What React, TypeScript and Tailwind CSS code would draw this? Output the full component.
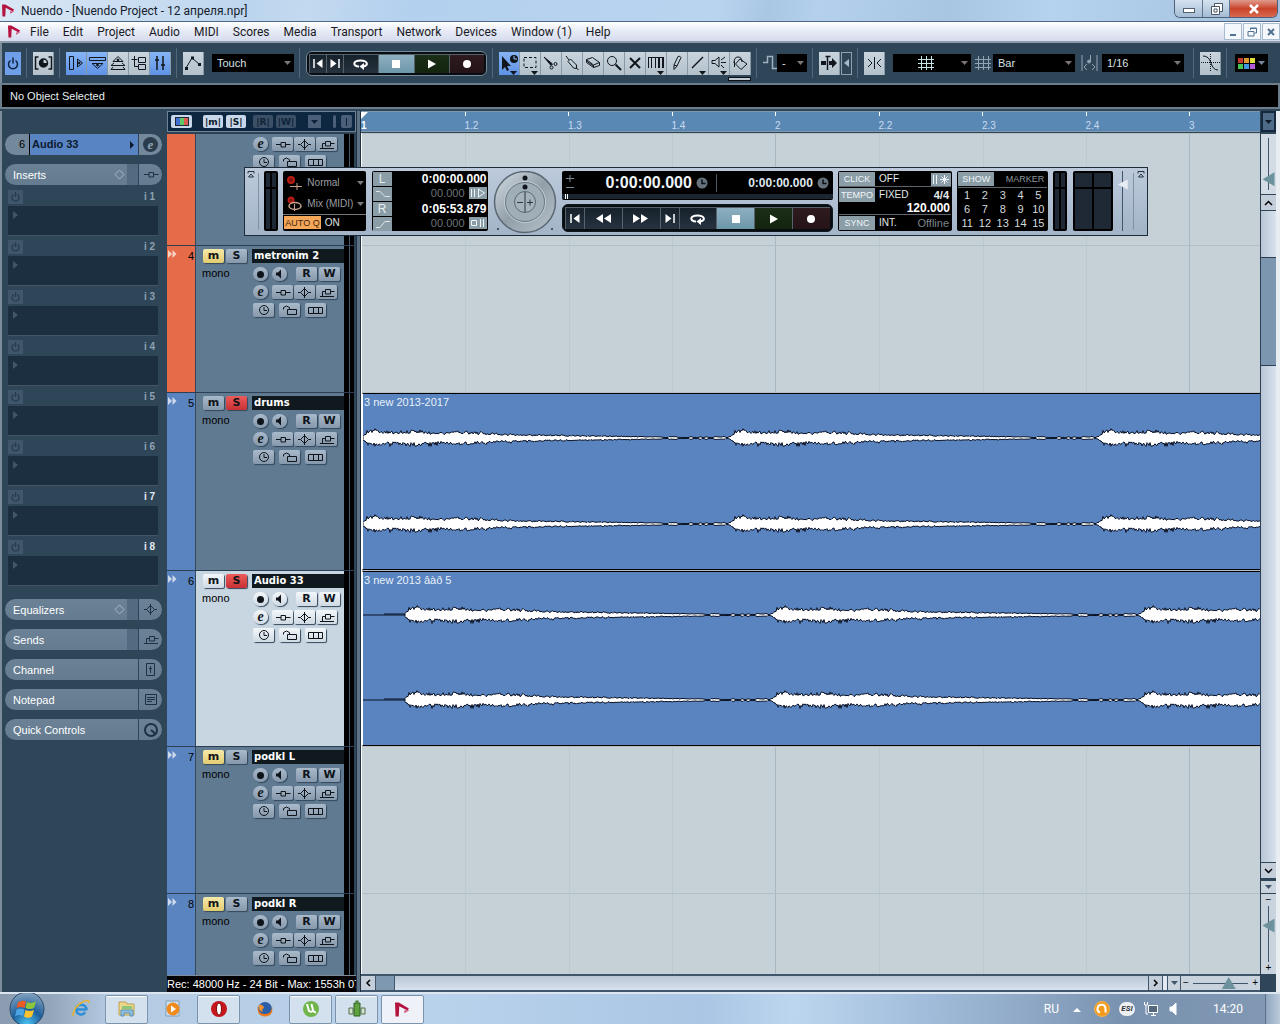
import type { ReactNode } from 'react';
import clsx from 'clsx';

const MENU = ['File', 'Edit', 'Project', 'Audio', 'MIDI', 'Scores', 'Media', 'Transport', 'Network', 'Devices', 'Window (1)', 'Help'];

/* ---------- small drawings ---------- */

interface DrawProps {
  d?: string;
  w?: number;
  h?: number;
  fill?: string;
  sw?: number;
  className?: string;
  children?: ReactNode;
}

function Draw({ d, w = 16, h = 16, fill = 'none', sw = 1, className, children }: DrawProps) {
  return (
    <svg
      width={w}
      height={h}
      viewBox={`0 0 ${w} ${h}`}
      fill={fill}
      stroke="currentColor"
      strokeWidth={sw}
      className={clsx('block shrink-0', className)}
      aria-hidden="true"
    >
      {d && <path d={d} />}
      {children}
    </svg>
  );
}

function Caret({ className }: { className?: string }) {
  return (
    <svg width="7" height="4" viewBox="0 0 7 4" className={clsx('block shrink-0', className)} aria-hidden="true">
      <path d="M0 0h7L3.500 4z" fill="currentColor" />
    </svg>
  );
}

function NuendoMark({ className }: { className?: string }) {
  return (
    <svg viewBox="0 0 14 14" className={clsx('block shrink-0', className)} aria-hidden="true">
      <path d="M0 0.500L3.500 0.500L13 6L11.500 8L4 4L3.500 13.500L0.500 13.500z" fill="#b5123f" />
      <path d="M8.500 8l5 -.5L9 10.500z" fill="#d4547c" />
    </svg>
  );
}

const insertPath = 'M1 6.500h5M10.500 6.500h5M6 4.500h4.500v4.500h-4.500z';
const eqPath = 'M8.500 1v11M8.500 2.500l4 4l-4 4l-4-4zM2 6.500h2.500M12.500 6.500h2.500';
const sendPath = 'M1 10.500h14M3.500 10.500v-5h3M6.500 3.500h5v4.500h-5zM11.500 5.500h4';

function PowerIcon({ className }: { className?: string }) {
  return <Draw w={12} h={14} sw={1.5} className={className} d="M3.500 4.500a4.500 4.500 0 1 0 5 0M6 1.500v6" />;
}

function ClockIcon({ className }: { className?: string }) {
  return (
    <Draw w={12} h={12} className={className}>
      <circle cx="6" cy="6" r="4.500" />
      <path d="M6 3v3.500h3" />
    </Draw>
  );
}

function TimeFormatIcon() {
  return (
    <Draw w={12} h={12} sw={0} className="text-[#66737e]">
      <circle cx="6" cy="6" r="5.500" fill="currentColor" />
      <path d="M6 2.500v4h3.500" fill="none" stroke="#0a0f14" strokeWidth="1.500" />
    </Draw>
  );
}

function CycleIcon() {
  return (
    <Draw w={18} h={12} sw={2}>
      <path d="M7 8.500C0 8 1 2.500 8.500 2.500S17 8 11 8.500" />
      <path d="M12 5v7L7.500 8.500z" fill="currentColor" stroke="none" />
    </Draw>
  );
}

/* ---------- title and menu ---------- */

function TitleBar() {
  return (
    <header className="flex h-[22px] shrink-0 items-start border-b border-[#4d6784] bg-[linear-gradient(100deg,#d9e7f5_0%,#bcd5ee_20%,#c3d9ef_24%,#b3d0ee_32%,#b9d4ef_56%,#a9c6e3_60%,#b4d0ed_64%,#a8c5e2_74%,#b5d2ef_82%,#a4c0dc_100%)]">
      <div className="flex h-[21px] flex-1 items-center gap-1.5 pl-0.5">
        <NuendoMark className="size-[13px]" />
        <h1 className="text-[12px] leading-4 text-[#15202c]">Nuendo - [Nuendo Project - 12 апреля.npr]</h1>
      </div>
      <div className="mr-0.5 flex h-[18px] overflow-hidden rounded-b-md border border-t-0 border-[#4b607a]">
        <button aria-label="Minimize" className="flex w-[28px] items-center justify-center border-r border-[#5f7690] bg-linear-to-b from-[#d4e2f0] to-[#a5bcd4]">
          <span className="mt-1 h-[5px] w-[12px] border border-[#51606f] bg-white" />
        </button>
        <button aria-label="Restore" className="flex w-[27px] items-center justify-center border-r border-[#5f7690] bg-linear-to-b from-[#d4e2f0] to-[#a5bcd4] text-[#4a5866]">
          <Draw w={13} h={12} d="M4.500 3v-2.500h8v8h-2.500M1.500 3.500h8v8h-8zM4 6h3v3h-3z" fill="#fff" />
        </button>
        <button aria-label="Close" className="flex w-[47px] items-center justify-center bg-linear-to-b from-[#e09a8c] via-[#c9432b] to-[#d9694d] text-white">
          <Draw w={12} h={10} sw={2.5} d="M2 1l8 8M10 1l-8 8" />
        </button>
      </div>
    </header>
  );
}

function MenuBar() {
  const box = 'flex h-[17px] w-[18px] items-center justify-center border border-[#a9bccf] bg-[#f4f8fc]';
  return (
    <nav className="flex h-[21px] shrink-0 items-center border-b-2 border-[#8d9bab] bg-linear-to-b from-white via-[#e6eaf6] to-[#d6dcee] pl-2">
      <NuendoMark className="size-[13px]" />
      <ul className="flex flex-1 gap-[14px] pl-[9px] text-[12px] leading-4 text-[#1a1a24]">
        {MENU.map((m) => (
          <li key={m}>
            <button>{m}</button>
          </li>
        ))}
      </ul>
      <div className="flex gap-px text-[#50708f]">
        <button aria-label="Minimize document" className={box}>
          <Draw w={10} h={10} sw={2} d="M2 8h6" />
        </button>
        <button aria-label="Restore document" className={box}>
          <Draw w={10} h={10} d="M3.500 3v-2h6v5h-2M1 4.500h6v4.500h-6zM3.500 1.500h6" />
        </button>
        <button aria-label="Close document" className={box}>
          <Draw w={10} h={10} sw={2} d="M2 2l6 6M8 2l-6 6" />
        </button>
      </div>
    </nav>
  );
}

/* ---------- toolbar ---------- */

function Sep() {
  return <div className="mr-1.5 ml-[5px] h-[30px] w-px shrink-0 bg-[#50677c]" />;
}

function ToolButton({ label, active, more, children }: { label: string; active?: boolean; more?: boolean; children: ReactNode }) {
  return (
    <button
      aria-label={label}
      className={clsx(
        'relative flex h-[23px] w-[21px] shrink-0 items-center justify-center border-r border-[#8798a6] text-[#10161c]',
        active ? 'bg-linear-to-b from-[#86b4f6] to-[#5f92e4]' : 'bg-linear-to-b from-[#c9d4dd] to-[#b3c1cb]',
      )}
    >
      {children}
      {more && <Caret className="absolute right-0.5 bottom-0" />}
    </button>
  );
}

interface DarkSelectProps {
  label: string;
  value: string;
  className: string;
}

function DarkSelect({ label, value, className }: DarkSelectProps) {
  return (
    <div className={clsx('relative flex h-[18px] shrink-0 items-center bg-black', className)}>
      <select aria-label={label} className="w-full appearance-none bg-transparent pl-[5px] text-[11px] leading-4 text-[#d8e2e6] outline-none">
        <option>{value}</option>
      </select>
      <Caret className="pointer-events-none absolute right-[3px] text-[#7b7577]" />
    </div>
  );
}

function TransportButtons({ wide }: { wide?: boolean }) {
  const base = 'flex items-center justify-center border-t border-l border-[#56636c] text-white';
  const dark = 'bg-linear-to-b from-[#16212b] to-[#26333f]';
  const end = wide ? 'w-[19px]' : 'w-[17px]';
  return (
    <div
      className={clsx(
        'flex rounded-md border bg-[#080d12] p-[2px]',
        wide ? 'h-[28px] w-[271px] border-[#10181f]' : 'h-[25px] w-[181px] border-[#76899a]',
      )}
    >
      <button aria-label="Go to start" className={clsx(base, dark, end)}>
        <Draw w={10} h={9}>
          <path d="M1 0v9" strokeWidth="1.500" />
          <path d="M9.500 0v9l-6-4.500z" fill="currentColor" stroke="none" />
        </Draw>
      </button>
      {wide && (
        <>
          <button aria-label="Rewind" className={clsx(base, dark, 'flex-1')}>
            <Draw w={16} h={9} d="M8 0v9l-7-4.500zM16 0v9l-7-4.500z" fill="currentColor" sw={0} />
          </button>
          <button aria-label="Forward" className={clsx(base, dark, 'flex-1')}>
            <Draw w={16} h={9} d="M0 0v9l7-4.500zM8 0v9l7-4.500z" fill="currentColor" sw={0} />
          </button>
        </>
      )}
      <button aria-label="Go to end" className={clsx(base, dark, end)}>
        <Draw w={10} h={9}>
          <path d="M9 0v9" strokeWidth="1.500" />
          <path d="M0.500 0v9l6-4.500z" fill="currentColor" stroke="none" />
        </Draw>
      </button>
      <button aria-label="Cycle" className={clsx(base, dark, 'flex-1')}>
        <CycleIcon />
      </button>
      <button aria-label="Stop" className={clsx(base, 'flex-1 bg-linear-to-b from-[#8eb0c0] to-[#6c97aa]')}>
        <span className="size-[8px] bg-white" />
      </button>
      <button aria-label="Play" className={clsx(base, 'flex-1 bg-linear-to-b from-[#1b2e17] to-[#14240f]')}>
        <Draw w={8} h={10} d="M0 0.500l8 4.500l-8 4.500z" fill="currentColor" sw={0} />
      </button>
      <button aria-label="Record" className={clsx(base, 'flex-1 bg-linear-to-b from-[#2f1b1f] to-[#241317]')}>
        <span className="size-[8px] rounded-full bg-white" />
      </button>
    </div>
  );
}

const gridPath = 'M0 4.500h16M0 8.500h16M0 12.500h16M3.500 1v14M8.500 1v14M13.500 1v14';

function Toolbar() {
  return (
    <div className="flex h-[40px] shrink-0 items-center border-l-2 border-[#7c8c9b] bg-[#2f4558] pl-[3px]">
      <button aria-label="Activate project" className="flex h-[23px] w-[16px] shrink-0 items-center justify-center bg-[#6f9fe9] text-[#0d2340]">
        <PowerIcon />
      </button>
      <Sep />
      <ToolButton label="Constrain delay">
        <Draw w={19} h={16} d="M4.500 2h-3v12h3M14.500 2h3v12h-3" sw={1.5}>
          <circle cx="9.500" cy="8" r="4" />
          <path d="M9.500 8v-4a4 4 0 0 0 0 8a4 4 0 0 0 4-4z" fill="currentColor" stroke="none" />
        </Draw>
      </ToolButton>
      <Sep />
      <div className="flex">
        <ToolButton label="Show inspector" active>
          <Draw w={16} h={16} d="M1.500 1.500h4v13h-4zM9.500 4l5 4l-5 4z">
            <circle cx="11" cy="8" r="1" fill="currentColor" />
          </Draw>
        </ToolButton>
        <ToolButton label="Show info line" active>
          <Draw w={17} h={16} d="M0.500 2.500h16v3h-16zM3 8.500h11l-5.500 5z">
            <circle cx="8.500" cy="10" r="1" fill="currentColor" />
          </Draw>
        </ToolButton>
        <ToolButton label="Show overview">
          <Draw w={16} h={16} d="M3 6.500l5-5l5 5zM4 8l-3 2.500h14l-3-2.500M3 12l-2 2.500h14l-2-2.500">
            <circle cx="8" cy="5" r="1" fill="currentColor" />
          </Draw>
        </ToolButton>
        <ToolButton label="Open pool">
          <Draw w={16} h={16} d="M3.500 1v10.500h4M0.500 4.500h6M7.500 2.500h7v5h-7zM7.500 9.500h7v5h-7z" />
        </ToolButton>
        <ToolButton label="Open mixer" active>
          <Draw w={14} h={16} sw={1.5} d="M4 1v14M10 1v14M2 5h4M8 10h4" />
        </ToolButton>
      </div>
      <Sep />
      <ToolButton label="Automation">
        <Draw w={18} h={16} d="M2 13l6-10l7 6">
          <path d="M1 12h3v3h-3zM7 1.500h3v3h-3zM14 8h3v3h-3z" fill="currentColor" stroke="none" />
        </Draw>
      </ToolButton>
      <DarkSelect label="Automation mode" value="Touch" className="ml-2 w-[82px]" />
      <Sep />
      <TransportButtons />
      <Sep />
      <div className="relative flex">
        <ToolButton label="Object selection" active more>
          <Draw w={19} h={18} sw={0}>
            <path d="M2 2v14l3-3l2 4l2-1l-2-4h4z" fill="currentColor" />
            <circle cx="14" cy="5" r="4" fill="currentColor" />
            <path d="M14 2v3h3" stroke="#9cc1f7" strokeWidth="1" fill="none" />
          </Draw>
        </ToolButton>
        <ToolButton label="Range selection" more>
          <Draw w={14} h={14}>
            <path d="M1 1.500h12v10h-12z" strokeDasharray="3 2" />
          </Draw>
        </ToolButton>
        <ToolButton label="Split">
          <Draw w={16} h={16}>
            <path d="M1 2l8.500 7l-1.500 1.500z" fill="currentColor" />
            <circle cx="8.500" cy="12.500" r="1.500" />
            <circle cx="12.500" cy="9" r="1.500" />
          </Draw>
        </ToolButton>
        <ToolButton label="Glue">
          <Draw w={16} h={16} d="M2 1l3 4M4 6.500l2.500-2.500l6 6v3.500l-3-.5zM12.500 13l2 2" />
        </ToolButton>
        <ToolButton label="Erase">
          <Draw w={16} h={16} d="M1.500 4.500l6-2l7 5l-6 2.500zM1.500 4.500v3l7 5v-2.500M8.500 12.500l6-2v-3M1.500 6l7 5" />
        </ToolButton>
        <ToolButton label="Zoom">
          <Draw w={16} h={16}>
            <circle cx="6" cy="6" r="4.500" />
            <path d="M9.500 9.500l5.500 5.500" strokeWidth="2" />
          </Draw>
        </ToolButton>
        <ToolButton label="Mute">
          <Draw w={14} h={14} sw={2} d="M2 2l10 10M12 2l-10 10" />
        </ToolButton>
        <ToolButton label="Time warp" more>
          <Draw w={18} h={16} d="M1.500 2v11M4.500 2v11M8.500 2v11M1 2.500h15">
            <path d="M12 2v11M16 2v11" strokeWidth="2" />
          </Draw>
        </ToolButton>
        <ToolButton label="Draw">
          <Draw w={12} h={16} d="M3 10l4-8.500q2-1 3 1l-4 8.500l-3 3.500zM3 10l3 1" />
        </ToolButton>
        <ToolButton label="Line" more>
          <Draw w={16} h={16} sw={1.5} d="M2 13l11-11" />
        </ToolButton>
        <ToolButton label="Play" more>
          <Draw w={16} h={16} d="M1 5.500h3l4-3.500v10l-4-3.500h-3zM10 5l4-3M10 7.500h5M10 10l3 3" />
        </ToolButton>
        <ToolButton label="Color">
          <Draw w={17} h={16} d="M8 4l7 5l-6 5.500l-5.500-5.500zM2 8q0-6 4-6t4 5M2.500 6v6" />
        </ToolButton>
        <span className="absolute top-[25px] right-0 h-[4px] w-[23px] border border-[#0b1117] bg-[#bfcad2]" />
      </div>
      <Sep />
      <Draw w={14} h={16} className="text-[#9fb2c1]" d="M0 7.500h4.500v-6h5v12h4.500" sw={1.5} />
      <DarkSelect label="Nudge" value=" - " className="w-[30px]" />
      <Sep />
      <ToolButton label="Autoscroll">
        <Draw w={18} h={16} d="M7.500 1v14M5.500 1.500h5" sw={1.5}>
          <path d="M1 6h5v4h-5zM9 6h3v-3l5 5l-5 5v-3h-3z" fill="currentColor" stroke="none" />
        </Draw>
      </ToolButton>
      <button aria-label="Suspend autoscroll" className="ml-px flex h-[23px] w-[11px] shrink-0 items-center justify-center border border-[#8fa1b0] text-[#a9bac8]">
        <Draw w={5} h={8} d="M5 0v8l-5-4z" fill="currentColor" sw={0} />
      </button>
      <Sep />
      <ToolButton label="Snap">
        <Draw w={15} h={14} d="M1 3l4 4l-4 4M7.500 1v12M14 3l-4 4l4 4" />
      </ToolButton>
      <button aria-label="Snap type" className="ml-2 flex h-[18px] w-[78px] shrink-0 items-center justify-end gap-[27px] bg-black pr-[3px] text-[#7b7577]">
        <Draw w={16} h={16} d={gridPath} className="text-[#c5e4e8]" />
        <Caret />
      </button>
      <Draw w={16} h={16} d={gridPath} className="mr-0.5 ml-1 text-[#91a5b5]" />
      <DarkSelect label="Grid type" value="Bar" className="w-[82px]" />
      <Draw w={17} h={18} className="mr-1 ml-1.5 text-[#91a5b5]" d="M1 1v16M16 1v16M9.500 1v7M6 10l-3 3l3 3M11 10l3 3l-3 3">
        <circle cx="8" cy="7.500" r="1.500" fill="currentColor" />
      </Draw>
      <DarkSelect label="Quantize" value="1/16" className="mr-1 w-[82px]" />
      <Sep />
      <ToolButton label="Crossing">
        <Draw w={19} h={18} d="M2 2q6 0 8 7t7 7">
          <path d="M0 8.500h19M9.500 0v18" strokeDasharray="1 1" />
        </Draw>
      </ToolButton>
      <Sep />
      <button aria-label="Color" className="ml-0.5 flex h-[18px] w-[33px] shrink-0 items-center justify-end gap-[3px] bg-black pr-[3px] text-[#7687a0]">
        <span className="grid grid-cols-3 gap-px">
          <i className="size-[5px] bg-[#c23b2d]" />
          <i className="size-[5px] bg-[#dc9a34]" />
          <i className="size-[5px] bg-[#e2e03c]" />
          <i className="size-[5px] bg-[#46c552]" />
          <i className="size-[5px] bg-[#4196e0]" />
          <i className="size-[5px] bg-[#b25ad8]" />
        </span>
        <Caret />
      </button>
    </div>
  );
}

/* ---------- inspector ---------- */

function InspectorTab({ title, glyph, state, split }: { title: string; glyph: ReactNode; state?: boolean; split?: boolean }) {
  return (
    <button className="flex h-[21px] w-full items-stretch overflow-hidden rounded-full bg-linear-to-b from-[#6b8296] to-[#647b90] text-left">
      <span className="flex flex-1 items-center pl-2 text-[11px] leading-4 text-white">{title}</span>
      {state && (
        <span className="flex items-center pr-0.5 text-[#a9b9c6]">
          <Draw w={11} h={11} d="M5.500 1l4.500 4.500l-4.500 4.500l-4.500-4.500z" />
        </span>
      )}
      {split && <span className="w-[11px] bg-[#536a80]" />}
      <span className="flex w-[24px] items-center justify-center border-l border-[#2f4558] text-[#1d3145]">{glyph}</span>
    </button>
  );
}

function Inspector() {
  return (
    <aside className="flex w-[166px] shrink-0 flex-col border-l-2 border-[#7c8c9b] bg-[#2f4558] pt-[23px] pr-1 pl-[3px]">
      <div className="flex h-[21px] overflow-hidden rounded-full bg-[#73889b] text-[11px]">
        <span className="flex w-[25px] items-center justify-end border-r border-black pr-1 text-black">6</span>
        <button className="flex flex-1 items-center justify-between bg-[#5984c4] pr-1 pl-0.5 font-bold text-[#0b1a2c]">
          Audio 33
          <Draw w={4} h={8} d="M0 0l4 4l-4 4z" fill="currentColor" sw={0} />
        </button>
        <button aria-label="Edit channel" className="flex w-[24px] items-center justify-center border-l border-[#2f4558]">
          <span className="flex size-[15px] items-center justify-center rounded-full bg-[#2b3d4d] font-['Liberation_Serif',serif] text-[13px] leading-3 font-bold text-[#8fa2b3] italic">e</span>
        </button>
      </div>
      <div className="mt-[9px]">
        <InspectorTab title="Inserts" state split glyph={<Draw w={16} h={13} d={insertPath} />} />
      </div>
      <ol className="mt-0.5 flex flex-col pr-1 pl-[3px]">
        {[1, 2, 3, 4, 5, 6, 7, 8].map((n) => (
          <li key={n} className="h-[50px]">
            <div className="flex h-[19px] items-center justify-between pr-[3px]">
              <button aria-label={`Insert ${n} power`} className="flex h-[14px] w-[15px] items-center justify-center bg-[#40566a] text-[#243a4d]">
                <PowerIcon className="size-[11px]" />
              </button>
              <span className={clsx('text-[10px] leading-3 font-bold', n > 6 ? 'text-[#e4ecf2]' : 'text-[#8fa2b3]')}>i {n}</span>
            </div>
            <button aria-label={`Insert ${n} slot`} className="block h-[30px] w-full border-b border-[#445566] bg-[#1b2f41] text-[#40566a]">
              <Draw w={15} h={28} d="M5 4l5 4l-5 4z" fill="currentColor" sw={0} />
            </button>
          </li>
        ))}
      </ol>
      <div className="mt-3 flex flex-col gap-[9px]">
        <InspectorTab title="Equalizers" state split glyph={<Draw w={17} h={13} d={eqPath} />} />
        <InspectorTab title="Sends" split glyph={<Draw w={16} h={13} d={sendPath} />} />
        <InspectorTab title="Channel" glyph={<Draw w={12} h={15} d="M1.500 1.500h8v12h-8zM5.500 4v7M4 6.500h3" />} />
        <InspectorTab title="Notepad" glyph={<Draw w={14} h={13} d="M1.500 1.500h11v10h-11zM3 4.500h8M3 6.500h8M3 8.500h5" />} />
        <InspectorTab
          title="Quick Controls"
          glyph={
            <Draw w={16} h={16} sw={2} d="M8 8l4 3.500">
              <circle cx="8" cy="8" r="6" />
            </Draw>
          }
        />
      </div>
    </aside>
  );
}

/* ---------- track list ---------- */

interface Track {
  id: number;
  name?: string;
  size: string;
  strip: string;
  mute?: boolean;
  solo?: boolean;
  selected?: boolean;
  clip?: { title: string; lead: number; lanes: number[] };
}

// The first track is scrolled half out of view and shows only its lower rows
const TRACKS: Track[] = [
  { id: 3, size: 'h-[112px]', strip: 'bg-[#e66b49]' },
  { id: 4, name: 'metronim 2', size: 'h-[147px]', strip: 'bg-[#e66b49]', mute: true },
  { id: 5, name: 'drums', size: 'h-[178px]', strip: 'bg-[#5984bf]', solo: true, clip: { title: '3 new 2013-2017', lead: 0, lanes: [28, 114] } },
  { id: 6, name: 'Audio 33', size: 'h-[176px]', strip: 'bg-[#5984bf]', solo: true, selected: true, clip: { title: '3 new 2013 âàð 5', lead: 42, lanes: [27, 112] } },
  { id: 7, name: 'podkl L', size: 'h-[147px]', strip: 'bg-[#5984bf]', mute: true },
  { id: 8, name: 'podkl R', size: 'min-h-0 flex-1', strip: 'bg-[#5984bf]', mute: true },
];

type Tone = 'plain' | 'light' | 'yellow' | 'red';

const TONES: Record<Tone, string> = {
  plain: 'bg-linear-to-b from-[#a9bacb] to-[#8698ab]',
  light: 'bg-linear-to-b from-[#f3f7fa] to-[#d0dae3]',
  yellow: 'bg-linear-to-b from-[#f6eaa9] to-[#e3cc70]',
  red: 'bg-linear-to-b from-[#ec5a5a] to-[#c83034]',
};

function Key({ label, tone, round, children }: { label: string; tone: Tone; round?: boolean; children: ReactNode }) {
  return (
    <button
      aria-label={label}
      className={clsx(
        "flex h-[14px] shrink-0 items-center justify-center font-['DejaVu_Sans',sans-serif] text-[11px] leading-3 font-bold text-[#0e1419] shadow-[1px_1px_1px_#33475a]",
        round ? 'w-[15px] rounded-full' : 'w-[21px] rounded-xs',
        TONES[tone],
      )}
    >
      {children}
    </button>
  );
}

function TrackHeader({ track }: { track: Track }) {
  const tone: Tone = track.selected ? 'light' : 'plain';
  return (
    <li className={clsx('grid grid-cols-[29px_1fr_10px] overflow-hidden border-t border-[#2c3f52]', track.size)}>
      <div className={clsx('flex justify-between border-r border-[#33475a] px-px pt-0.5 text-[11px] leading-4', track.strip)}>
        {track.name && (
          <>
            <Draw w={9} h={9} d="M0 0l4 4l-4 4zM4.500 0l4 4l-4 4z" fill="currentColor" sw={0} className="mt-0.5 text-white/70" />
            <span>{track.id}</span>
          </>
        )}
      </div>
      <div className={clsx('flex flex-col gap-1 pt-[3px] pl-1.5', track.selected ? 'bg-[#c8d6e2]' : 'bg-[#607a92]')}>
        {track.name && (
          <>
            <div className="flex gap-0.5 pl-px">
              <Key label="Mute" tone={track.mute ? 'yellow' : tone}>m</Key>
              <Key label="Solo" tone={track.solo ? 'red' : tone}>S</Key>
              <span className="ml-[3px] h-[14px] flex-1 bg-[#101a1e] pl-0.5 font-['DejaVu_Sans',sans-serif] text-[10px] leading-[14px] font-bold text-white">
                {track.name}
              </span>
            </div>
            <div className="flex">
              <span className="w-[51px] text-[11px] leading-[13px] text-black">mono</span>
              <Key label="Record enable" tone={tone} round>
                <span className="size-[7px] rounded-full bg-[#0e1419]" />
              </Key>
              <span className="w-1" />
              <Key label="Monitor" tone={tone} round>
                <Draw w={9} h={10} d="M1 3.500h2l3-3v9l-3-3h-2z" fill="currentColor" sw={0} />
              </Key>
              <span className="w-[9px]" />
              <Key label="Read" tone={tone}>R</Key>
              <span className="w-0.5" />
              <Key label="Write" tone={tone}>W</Key>
            </div>
          </>
        )}
        <div className="flex gap-px pl-[51px]">
          <Key label="Edit channel" tone={tone} round>
            <span className="font-['Liberation_Serif',serif] text-[14px] italic">e</span>
          </Key>
          <span className="w-0.5" />
          <Key label="Inserts" tone={tone}><Draw w={16} h={13} d={insertPath} /></Key>
          <Key label="Equalizer" tone={tone}><Draw w={17} h={13} d={eqPath} /></Key>
          <Key label="Sends" tone={tone}><Draw w={16} h={13} d={sendPath} /></Key>
        </div>
        <div className="flex gap-[5px] pl-[51px]">
          <Key label="Time base" tone={tone}><ClockIcon /></Key>
          <Key label="Lock" tone={tone}><Draw w={16} h={12} d="M5.500 5.500h9v5h-9zM7.500 5.500v-2q-3-3-6 0v2" /></Key>
          <Key label="Lanes" tone={tone}><Draw w={17} h={11} d="M1.500 2.500h14v6h-14zM6.500 2.500v6M11.500 2.500v6" /></Key>
        </div>
      </div>
      <div className="flex justify-center bg-black">
        <span className="w-px bg-[#465a6c]" />
      </div>
    </li>
  );
}

function HeadKey({ label, on, children }: { label: string; on?: boolean; children: ReactNode }) {
  return (
    <button
      aria-label={label}
      className={clsx(
        "flex h-[13px] w-[20px] items-center justify-center rounded-xs font-['DejaVu_Sans',sans-serif] text-[9px] leading-3 font-bold",
        on ? 'bg-[#c9d7ea] text-[#0b1826]' : 'bg-[#3b5066] text-[#0f2338]',
      )}
    >
      {children}
    </button>
  );
}

function TrackList() {
  return (
    <section className="flex w-[190px] shrink-0 flex-col bg-[#2f4558] pl-px">
      <div className="flex h-[21px] shrink-0 items-center gap-[3px] overflow-hidden border border-[#6f8496] bg-[#0e2740] pl-[3px]">
        <button aria-label="Track colors" className="mr-2 flex h-[13px] w-[21px] items-center justify-center rounded-xs bg-[#c9d7ea]">
          <span className="flex border border-[#1c2836]">
            <i className="h-[7px] w-[4px] bg-[#3f6fd0]" />
            <i className="h-[7px] w-[4px] bg-[#5cc86a]" />
            <i className="h-[7px] w-[4px] bg-[#dd5a50]" />
          </span>
        </button>
        <HeadKey label="Deactivate all mutes" on>|m|</HeadKey>
        <HeadKey label="Deactivate all solos" on>|S|</HeadKey>
        <span className="w-px" />
        <HeadKey label="Read all">|R|</HeadKey>
        <HeadKey label="Write all">|W|</HeadKey>
        <span className="w-[6px]" />
        <button aria-label="Track list menu" className="flex h-[13px] w-[13px] items-center justify-center bg-[#4b6078] text-[#0f2338]">
          <Caret />
        </button>
        <span className="ml-[9px] h-[13px] w-[3px] rounded-xs bg-[#4b6078]" />
        <button aria-label="Divide track list" className="ml-0.5 flex h-[13px] w-[11px] items-center justify-center rounded-xs bg-[#4b6078]">
          <span className="h-[8px] w-px bg-[#0f2338]" />
        </button>
      </div>
      <ul className="mt-px flex min-h-0 flex-1 flex-col overflow-hidden pr-0.5">
        {TRACKS.map((t) => (
          <TrackHeader key={t.id} track={t} />
        ))}
      </ul>
      <p className="h-[17px] shrink-0 overflow-hidden border-t border-[#7c8c9b] bg-black text-[11px] leading-4 whitespace-nowrap text-white">
        Rec: 48000 Hz - 24 Bit - Max: 1553h 07
      </p>
    </section>
  );
}

/* ---------- arrangement ---------- */

const PERIOD = 368;
const WAVE_LENGTH = 2600;

// Deterministic noise, so both channels of a clip keep the same shape
function noise(n: number) {
  const v = Math.sin(n * 127.1 + 11.7) * 43758.5453;
  return v - Math.floor(v);
}

function level(x: number) {
  if (x < 4) return 1.5 + x;
  if (x < 110) return 5.4 + Math.sin(x / 7) * 0.7 + Math.sin(x / 23) * 0.5;
  if (x < 155) return 5 - (x - 110) * 0.045;
  if (x < 250) return 3 - (x - 155) * 0.014;
  if (x < 300) return 1.7 - (x - 250) * 0.014;
  return noise(Math.floor(x / 3)) > 0.6 ? 1.2 : 0.5;
}

function wavePath(lead: number, mid: number) {
  const top: string[] = [];
  const bottom: string[] = [];
  for (let x = lead; x < WAVE_LENGTH; x += 1) {
    const at = (x - lead) % PERIOD;
    const l = level(at);
    const up = l * (0.7 + noise(at) * 0.6) + (noise(at + 900) > 0.93 ? l * 0.35 : 0);
    const down = l * (0.7 + noise(at + 400) * 0.6) + (noise(at + 1300) > 0.93 ? l * 0.35 : 0);
    top.push(`${x} ${(mid - up).toFixed(1)}`);
    bottom.unshift(`${x} ${(mid + down).toFixed(1)}`);
  }
  return `M${top.join('L')}L${bottom.join('L')}z`;
}

function Clip({ title, lead, lanes }: { title: string; lead: number; lanes: number[] }) {
  return (
    <article className="flex h-full flex-col overflow-hidden border-y border-l border-y-black border-l-white bg-[#5984bf]">
      <h2 className="h-4 pl-px text-[11px] leading-4 text-[#e8f0fa]">{title}</h2>
      <svg width="100%" height="160" className="block shrink-0" role="img" aria-label={`${title} waveform`}>
        {lanes.map((mid) => (
          <g key={mid} stroke="#0a1226" strokeWidth="1" fill="#fff">
            {lead > 0 && <path d={`M0 ${mid}H${lead}M${lead / 2} ${mid - 1}H${lead}`} />}
            <path d={wavePath(lead, mid)} />
          </g>
        ))}
      </svg>
    </article>
  );
}

function Ruler() {
  return (
    <div className="flex h-[21px] shrink-0 overflow-hidden border-y border-[#8197aa] bg-[#5a88b5]">
      {[1, 2, 3, 4, 5, 6].map((bar) => (
        <div key={bar} className="grid w-[414px] shrink-0 grid-cols-4 text-[10px] leading-[11px] text-[#c9dbec]">
          {[1, 2, 3, 4].map((beat) => (
            <div key={beat} className="flex flex-col justify-between">
              {bar === 1 && beat === 1 ? (
                <Draw w={7} h={7} d="M0 0h7l-7 7z" fill="#fff" sw={0} />
              ) : (
                <span className="h-[4px] w-px bg-white" />
              )}
              <span className={bar === 1 && beat === 1 ? 'font-bold text-white' : ''}>{beat === 1 ? bar : `${bar}.${beat}`}</span>
            </div>
          ))}
        </div>
      ))}
    </div>
  );
}

function Arrangement() {
  return (
    <section className="flex min-w-0 flex-1 flex-col">
      <Ruler />
      <div className="relative mt-px flex min-h-0 flex-1 flex-col overflow-hidden border-l border-white bg-[#c5d1d7]">
        <div className="absolute inset-0 -left-px flex overflow-hidden">
          {[0, 1, 2, 3, 4, 5].map((bar) => (
            <div key={bar} className="grid w-[414px] shrink-0 grid-cols-4 border-l border-[#a9b8be]">
              <i />
              <i className="border-l border-[#bcc9cf]" />
              <i className="border-l border-[#bcc9cf]" />
              <i className="border-l border-[#bcc9cf]" />
            </div>
          ))}
        </div>
        {TRACKS.map((t) => (
          <div key={t.id} className={clsx('relative shrink-0 border-t border-[#b2c0c6]', t.size)}>
            {t.clip && <Clip {...t.clip} />}
          </div>
        ))}
      </div>
      <div className="flex h-[18px] shrink-0 border-y-2 border-[#41566a] bg-[#e3e9f2]">
        <button aria-label="Scroll left" className="flex w-[15px] items-center justify-center border-r border-[#41566a] bg-[#c3ceda] text-black">
          <Draw w={6} h={8} sw={1.5} d="M5 1l-3 3l3 3" />
        </button>
        <span className="w-[19px] border-r border-[#41566a] bg-[#7f98b2]" />
        <span className="flex-1 bg-linear-to-b from-[#b9c6d6] to-[#d9e2ee]" />
        <button aria-label="Scroll right" className="flex w-[15px] items-center justify-center border-x border-[#41566a] bg-[#c3ceda] text-black">
          <Draw w={6} h={8} sw={1.5} d="M1 1l3 3l-3 3" />
        </button>
        <button aria-label="Horizontal zoom presets" className="ml-1 flex w-[14px] items-center justify-center border-x border-[#41566a] bg-[#c8d3dd] text-[#41566a]">
          <Caret />
        </button>
        <div className="flex w-[79px] items-center gap-1 bg-[#c8d3dd] px-0.5 text-[10px] leading-3">
          <span>−</span>
          <input
            type="range"
            aria-label="Horizontal zoom"
            defaultValue={70}
            className="h-[14px] min-w-0 flex-1 appearance-none bg-[linear-gradient(#41566a,#41566a)] bg-[length:100%_1px] bg-center bg-no-repeat [&::-webkit-slider-thumb]:h-[12px] [&::-webkit-slider-thumb]:w-[14px] [&::-webkit-slider-thumb]:appearance-none [&::-webkit-slider-thumb]:bg-[#6d929e] [&::-webkit-slider-thumb]:[clip-path:polygon(50%_0,100%_100%,0_100%)]"
          />
          <span>+</span>
        </div>
      </div>
    </section>
  );
}

const vSlider =
  'min-h-0 w-[14px] appearance-none bg-[linear-gradient(#41566a,#41566a)] bg-[length:1px_100%] bg-center bg-no-repeat [writing-mode:vertical-lr] [&::-webkit-slider-thumb]:h-[14px] [&::-webkit-slider-thumb]:w-[12px] [&::-webkit-slider-thumb]:appearance-none [&::-webkit-slider-thumb]:bg-[#6d929e] [&::-webkit-slider-thumb]:[clip-path:polygon(0_50%,100%_0,100%_100%)]';

function VerticalScroll() {
  return (
    <div className="flex w-[20px] shrink-0 flex-col border-r-4 border-l border-r-[#e8edf2] border-l-[#2c3f52] bg-[#2f4558]">
      <button aria-label="Ruler display" className="flex h-[21px] shrink-0 items-center justify-center border-2 border-[#14293d] bg-[#4e6a86] text-[#0c1b2a]">
        <Caret />
      </button>
      <div className="mt-0.5 flex h-[60px] shrink-0 justify-center bg-[#d3dce5] py-1">
        <input type="range" aria-label="Waveform zoom" defaultValue={90} className={vSlider} />
      </div>
      <button aria-label="Scroll up" className="mt-px flex h-[15px] shrink-0 items-center justify-center bg-[#c3ceda] text-black">
        <Draw w={9} h={6} sw={1.5} d="M1 5l3.500-3.500l3.500 3.500" />
      </button>
      <div className="mt-px flex min-h-0 flex-1 flex-col bg-linear-to-r from-[#b9c6d6] to-[#d9e2ee]">
        <span className="mt-[46px] h-[109px] border-y border-[#2c3f52] bg-[#7c96b0]" />
      </div>
      <button aria-label="Scroll down" className="mt-px flex h-[15px] shrink-0 items-center justify-center bg-[#c3ceda] text-black">
        <Draw w={9} h={6} sw={1.5} d="M1 1l3.500 3.500l3.500-3.500" />
      </button>
      <button aria-label="Vertical zoom presets" className="mt-[3px] flex h-[12px] shrink-0 items-center justify-center bg-[#c8d3dd] text-[#41566a]">
        <Caret />
      </button>
      <div className="mt-px mb-[18px] flex h-[80px] shrink-0 flex-col items-center bg-[#c8d3dd] text-[10px] leading-3">
        <span>−</span>
        <input type="range" aria-label="Vertical zoom" defaultValue={30} className={clsx(vSlider, 'flex-1')} />
        <span>+</span>
      </div>
    </div>
  );
}

/* ---------- floating transport panel ---------- */

function Tag({ children }: { children: ReactNode }) {
  return (
    <button className="flex h-[14px] w-[36px] shrink-0 items-center justify-center bg-[#8b9da6] text-[9px] leading-3 text-[#f0f6f8]">
      {children}
    </button>
  );
}

function PanelSelect({ label, value, glyph }: { label: string; value: string; glyph: ReactNode }) {
  return (
    <div className="relative flex h-[21px] items-center gap-1 pl-0.5">
      {glyph}
      <select aria-label={label} className="w-full appearance-none bg-transparent text-[10px] leading-4 text-[#9c9da0] outline-none">
        <option>{value}</option>
      </select>
      <Caret className="pointer-events-none absolute right-0.5 text-[#77797c]" />
    </div>
  );
}

function Locator({ side, time }: { side: string; time: string }) {
  const left = side === 'L';
  return (
    <div className="flex h-[29px]">
      <div className="flex w-[19px] flex-col gap-px">
        <button className="h-[14px] bg-[#8b9da6] text-[12px] leading-[14px] text-[#e7eff2]">{side}</button>
        <button aria-label={left ? 'Punch in' : 'Punch out'} className="flex h-[14px] items-center justify-center bg-[#8b9da6] text-[#dfe9ed]">
          <Draw w={15} h={12} d={left ? 'M1 3.500h4l5 5h5' : 'M1 9.500h4l5-6h5'} />
        </button>
      </div>
      <div className="flex flex-1 flex-col text-right">
        <span className="h-[14px] text-[12px] leading-[14px] font-bold text-white">{time}</span>
        <span className="flex h-[14px] items-center justify-end gap-1 text-[11px] leading-[14px] text-[#6b7276]">
          00.000
          <button aria-label={left ? 'Preroll' : 'Postroll'} className="flex h-[12px] w-[18px] items-center justify-center bg-[#8b9da6] text-[#f0f6f8]">
            <Draw w={16} h={10} d={left ? 'M1.500 1v8M4.500 1v8M8.500 1v8l6-4z' : 'M1.500 2.500h5v5h-5zM10.500 1v8M13.500 1v8'} />
          </button>
        </span>
      </div>
    </div>
  );
}

function JogWheel() {
  return (
    <svg width="64" height="64" viewBox="0 0 64 64" className="block shrink-0" role="img" aria-label="Jog wheel">
      <defs>
        <linearGradient id="jog" x1="0" y1="0" x2="1" y2="1">
          <stop offset="0" stopColor="#d5dde3" />
          <stop offset="0.500" stopColor="#929fa9" />
          <stop offset="1" stopColor="#b8c3cb" />
        </linearGradient>
      </defs>
      <circle cx="32" cy="31" r="30.500" fill="url(#jog)" stroke="#5b6873" strokeWidth="1.500" />
      <circle cx="32" cy="31" r="20.500" fill="#a0aeb8" stroke="#c3ced6" />
      <circle cx="32" cy="31" r="19.500" fill="none" stroke="#6c7a85" />
      <circle cx="32" cy="31" r="10.500" fill="#a6b3bd" stroke="#5b6873" />
      <path d="M32 21v20M24 31.500h6M34 31.500h6M37 28.500v6" stroke="#2b353e" />
      <circle cx="32" cy="7" r="2.500" fill="#10161c" />
      <circle cx="32" cy="16" r="2.500" fill="#10161c" />
      <circle cx="5" cy="58" r="1" fill="#2b353e" />
      <circle cx="59" cy="58" r="1" fill="#2b353e" />
    </svg>
  );
}

function Meter({ className }: { className: string }) {
  return (
    <div className={clsx('grid h-[60px] shrink-0 grid-cols-2 grid-rows-[14px_1fr] gap-0.5 rounded-xs bg-black p-0.5', className)}>
      <i className="bg-[#1e2935]" />
      <i className="bg-[#1e2935]" />
      <i className="bg-[#1e2935]" />
      <i className="bg-[#1e2935]" />
    </div>
  );
}

function EjectMark() {
  return (
    <button aria-label="Collapse" className="self-start text-[#24323f]">
      <Draw w={8} h={7} d="M1 0.500h6M1 0.500v2M7 0.500v2M1.500 6l2.500-3l2.500 3z" />
    </button>
  );
}

function TransportPanel() {
  return (
    <section
      aria-label="Transport panel"
      className="absolute top-[56px] left-[244px] flex h-[69px] w-[904px] justify-between border border-[#1e2c3a] bg-linear-to-b from-[#bccadb] to-[#a3b4c8] px-0.5 py-[3px]"
    >
      <div className="flex gap-[3px]">
        <EjectMark />
        <span className="my-0.5 w-px bg-[#8192a3]" />
      </div>
      <Meter className="w-[14px]" />
      <div className="flex h-[60px] w-[83px] flex-col rounded-xs bg-black pt-px">
        <PanelSelect
          label="Record mode"
          value="Normal"
          glyph={
            <Draw w={18} h={16} d="M5 11.500h12M12 8v7" className="text-[#c9a48f]">
              <circle cx="6" cy="5" r="3" fill="#7a130d" stroke="#b81d14" strokeWidth="2" />
            </Draw>
          }
        />
        <PanelSelect
          label="Cycle record mode"
          value="Mix (MIDI)"
          glyph={
            <Draw w={18} h={16} className="text-[#c9a48f]">
              <circle cx="6" cy="4" r="2.500" fill="#7a130d" stroke="#b81d14" strokeWidth="2" />
              <ellipse cx="10" cy="10" rx="6" ry="3.500" strokeWidth="1.500" />
              <path d="M9.500 8v7" />
            </Draw>
          }
        />
        <div className="flex h-[16px] items-center border-t border-[#76797c] pl-px text-[10px] leading-3">
          <button className="h-[13px] bg-[#f5a85a] px-px text-[9px] leading-3 whitespace-nowrap text-[#43220a]">AUTO Q</button>
          <span className="pl-1 text-[#e0e4e6]">ON</span>
        </div>
      </div>
      <div className="flex h-[60px] w-[116px] flex-col gap-px rounded-xs bg-black p-px">
        <Locator side="L" time="0:00:00.000" />
        <Locator side="R" time="0:05:53.879" />
      </div>
      <JogWheel />
      <div className="flex w-[271px] flex-col gap-1">
        <div className="flex h-[29px] flex-col rounded-xs bg-black">
          <div className="flex flex-1 items-center gap-1 px-1 text-[#7d8a94]">
            <Draw w={8} h={18} d="M0 4.500h8M4 1v7M0 13.500h8" />
            <span className="flex-1 text-right text-[16px] leading-5 font-bold text-[#eef4f8]">0:00:00.000</span>
            <TimeFormatIcon />
            <span className="mx-1 h-[18px] w-px bg-[#4b555c]" />
            <span className="w-[88px] text-right text-[12px] leading-4 font-bold text-[#dfe7ec]">0:00:00.000</span>
            <TimeFormatIcon />
          </div>
          <div className="mb-px h-[5px] bg-[#1c2630] pl-[3px]">
            <span className="block h-[5px] w-[3px] border-x border-white" />
          </div>
        </div>
        <TransportButtons wide />
      </div>
      <div className="flex h-[60px] w-[114px] flex-col justify-between rounded-xs bg-black p-px text-[10px] leading-3 text-[#e5eaed]">
        <div className="flex items-center gap-1">
          <Tag>CLICK</Tag>
          <span className="flex-1">OFF</span>
          <button aria-label="Precount" className="flex h-[13px] w-[20px] items-center justify-center bg-[#8b9da6] text-[#f0f6f8]">
            <Draw w={18} h={11} d="M1.500 1v9M4.500 1v9M12.500 1v9M8 5.500h9M9.500 2.500l6 6M15.500 2.500l-6 6" />
          </button>
        </div>
        <div className="flex flex-col">
          <div className="flex items-center gap-1 border-t border-[#5d666c] pt-px">
            <Tag>TEMPO</Tag>
            <span className="flex-1">FIXED</span>
            <span className="pr-0.5 text-[11px] font-bold">4/4</span>
          </div>
          <span className="pr-px text-right text-[12px] leading-3 font-bold text-white">120.000</span>
        </div>
        <div className="flex items-center gap-1 border-t border-[#5d666c] pt-px">
          <Tag>SYNC</Tag>
          <span className="flex-1">INT.</span>
          <span className="pr-0.5 text-[11px] text-[#7b8388]">Offline</span>
        </div>
      </div>
      <div className="flex h-[60px] w-[91px] flex-col rounded-xs bg-black p-px text-[10px] leading-3 text-[#d4dadd]">
        <div className="flex items-center justify-between border-b border-[#5d666c] pr-[3px] pb-px">
          <Tag>SHOW</Tag>
          <span className="text-[9px] text-[#8e979c]">MARKER</span>
        </div>
        <div className="grid flex-1 grid-cols-5 items-center text-center text-[11px]">
          {Array.from({ length: 15 }, (_, i) => (
            <button key={i}>{i + 1}</button>
          ))}
        </div>
      </div>
      <Meter className="w-[14px]" />
      <Meter className="w-[40px]" />
      <input
        type="range"
        aria-label="Output level"
        defaultValue={17}
        className="h-[60px] w-[10px] appearance-none bg-[linear-gradient(#41566a,#41566a)] bg-[length:1px_100%] bg-center bg-no-repeat [writing-mode:vertical-lr] [&::-webkit-slider-thumb]:size-[10px] [&::-webkit-slider-thumb]:appearance-none [&::-webkit-slider-thumb]:bg-[#e6ecf1] [&::-webkit-slider-thumb]:[clip-path:polygon(0_50%,100%_0,100%_100%)]"
      />
      <div className="flex gap-[3px]">
        <span className="my-0.5 w-px bg-[#8192a3]" />
        <EjectMark />
      </div>
    </section>
  );
}

/* ---------- taskbar ---------- */

const TASKS: { name: string; open?: boolean; art: ReactNode }[] = [
  {
    name: 'Internet Explorer',
    art: (
      <>
        <path d="M15.500 10.500H5.500a4.500 4.500 0 0 0 8.500 2.500M5 10a5 4.500 0 0 1 10.500 1" fill="none" stroke="#2e8fd8" strokeWidth="2.500" />
        <path d="M2 17q0-8 8-13t8 0" fill="none" stroke="#e6b52f" strokeWidth="1.500" />
      </>
    ),
  },
  {
    name: 'Explorer',
    open: true,
    art: (
      <>
        <path d="M2 3h7l1 2h7v11H2z" fill="#ecd88a" stroke="#bda14e" />
        <path d="M5 7h10v3H5z" fill="#8fc77a" />
        <path d="M4 17v-6h12v6h-3v-3H7v3z" fill="#8fc0e0" stroke="#5b93bb" />
      </>
    ),
  },
  {
    name: 'Media Player',
    art: (
      <>
        <path d="M3 2h13v15H3z" fill="#cfe0ee" stroke="#7f9db9" />
        <circle cx="10" cy="10" r="6.500" fill="#ef8a1d" />
        <path d="M8 6.500l5 3.500l-5 3.500z" fill="#fff" />
      </>
    ),
  },
  {
    name: 'Opera',
    open: true,
    art: (
      <>
        <circle cx="10" cy="10" r="8" fill="#c4161c" />
        <ellipse cx="10" cy="10" rx="2.500" ry="6" fill="#fff" stroke="#7d0c10" />
      </>
    ),
  },
  {
    name: 'Firefox',
    art: (
      <>
        <circle cx="10" cy="10" r="7" fill="#2a5ea8" />
        <path d="M3 6q0 10 8 9q6-1 6-8q2 10-7 10.500Q1 17 3 6z" fill="#ec7a1c" />
        <path d="M4 6q4-1 5 3q-3 1-1 4q-5-1-4-7z" fill="#f0912c" />
      </>
    ),
  },
  {
    name: 'uTorrent',
    open: true,
    art: (
      <>
        <circle cx="10" cy="10" r="8" fill="#6fb54a" />
        <path d="M6 5l2 7q3 2 4-1l-1.500-6M12 11q1 3 3 2" fill="none" stroke="#fff" strokeWidth="2" />
      </>
    ),
  },
  {
    name: 'Device monitor',
    open: true,
    art: (
      <>
        <path d="M7 4h6v13H7z" fill="#5fa341" stroke="#2d6120" />
        <path d="M8.500 1.500h3v2h-3z" fill="#3c7a2a" />
        <path d="M2 9h4v6H2zM14 9h4v6h-4z" fill="#d5e3d0" stroke="#4f6d48" />
      </>
    ),
  },
];

function TaskBar() {
  return (
    <footer className="flex h-[32px] shrink-0 items-center border-t-2 border-[#dce6f0] bg-[linear-gradient(90deg,#8b9cb0_0,#93a5ba_50px,#b5cbe3_110px,#b9d2ec_440px,#aac6e4_55%,#bdd6ef_62%,#a2bddb_72%,#8fa9c6_80%,#7891ae_88%,#8299b4_100%)]">
      <button aria-label="Start" className="ml-[9px] shrink-0">
        <svg width="36" height="32" viewBox="0 0 36 32" className="block">
          <defs>
            <radialGradient id="orb" cx="0.5" cy="0.95" r="0.9">
              <stop offset="0" stopColor="#4cc5f4" />
              <stop offset="0.5" stopColor="#1d5f9c" />
              <stop offset="1" stopColor="#7f9fbd" />
            </radialGradient>
          </defs>
          <circle cx="18" cy="16" r="17" fill="url(#orb)" stroke="#28496b" />
          <path d="M9 9.500q4-3 8-1l-1.500 6.500q-4-2-8 0z" fill="#ea5b26" />
          <path d="M18 9q4 2 9-.5l-2 6.500q-4 2-8.500 0z" fill="#8cc63a" />
          <path d="M7.500 16.500q4-2 8 0l-1.500 6.500q-4-2-8 .5z" fill="#4da4e4" />
          <path d="M16.500 17q4 2 8.500 0l-2 6.500q-4 2.500-8 0z" fill="#fbc42c" />
        </svg>
      </button>
      <div className="ml-[14px] flex gap-[3px]">
        {TASKS.map((t) => (
          <button
            key={t.name}
            aria-label={t.name}
            className={clsx(
              'flex h-[29px] w-[43px] items-center justify-center rounded-xs border',
              t.open ? 'border-[#7c93ac] bg-[#d3e1ef] inset-shadow-xs inset-shadow-white' : 'border-transparent',
            )}
          >
            <svg width="20" height="20" viewBox="0 0 20 20">{t.art}</svg>
          </button>
        ))}
        <button aria-label="Nuendo" className="flex h-[29px] w-[43px] items-center justify-center rounded-xs border border-[#7c93ac] bg-[#eef2f8]">
          <NuendoMark className="size-[15px]" />
        </button>
      </div>
      <div className="ml-auto flex items-center gap-2 text-[12px] leading-4 text-white">
        <span className="pr-1.5">RU</span>
        <button aria-label="Show hidden icons">
          <Draw w={8} h={5} d="M0 5l4-4l4 4z" fill="currentColor" sw={0} />
        </button>
        <Draw w={18} h={18} className="ml-1">
          <circle cx="9" cy="9" r="7.500" fill="#f39a1b" stroke="#f7b34c" />
          <path d="M7 12.500a4 4 0 1 1 5.500-3.500v3.500" strokeWidth="2" />
        </Draw>
        <span className="flex h-[14px] w-[16px] items-center justify-center rounded-full bg-[#eef1f4] text-[8px] leading-3 font-bold text-[#30383f] italic">ESI</span>
        <Draw w={16} h={16} d="M5.500 4.500h9v7h-9zM8 14.500h5M10.500 12v2M1.500 1v3h3v-3M3 4v9h2">
          <path d="M6 5h8v6h-8z" fill="#55697e" stroke="none" />
        </Draw>
        <Draw w={12} h={14} className="ml-0.5" d="M1 5h2l4-4v12l-4-4h-2z" fill="currentColor" />
        <time className="ml-6 w-[36px]">14:20</time>
        <button aria-label="Show desktop" className="ml-2 h-[30px] w-[15px] border-l border-[#5b7088] bg-linear-to-r from-[#8fa6bf] to-[#bccbdc]" />
      </div>
    </footer>
  );
}

export default function App() {
  return (
    <div className="flex h-screen flex-col overflow-hidden bg-[#2f4558] font-[Roboto,'Noto_Sans',sans-serif] text-black">
      <TitleBar />
      <MenuBar />
      <div className="flex min-h-0 flex-1 flex-col font-['Liberation_Sans',Arial,sans-serif]">
        <Toolbar />
        <div className="mb-0.5 flex h-[26px] shrink-0 items-center border-2 border-[#6c7d8c] bg-black pl-2 text-[11px] leading-4 text-[#e6eef0]">
          No Object Selected
        </div>
        <main className="relative flex min-h-0 flex-1">
          <Inspector />
          <TrackList />
          <div className="w-[5px] shrink-0 border-x border-[#1f3143] bg-[#5d7285]" />
          <Arrangement />
          <VerticalScroll />
          <TransportPanel />
        </main>
      </div>
      <TaskBar />
    </div>
  );
}
